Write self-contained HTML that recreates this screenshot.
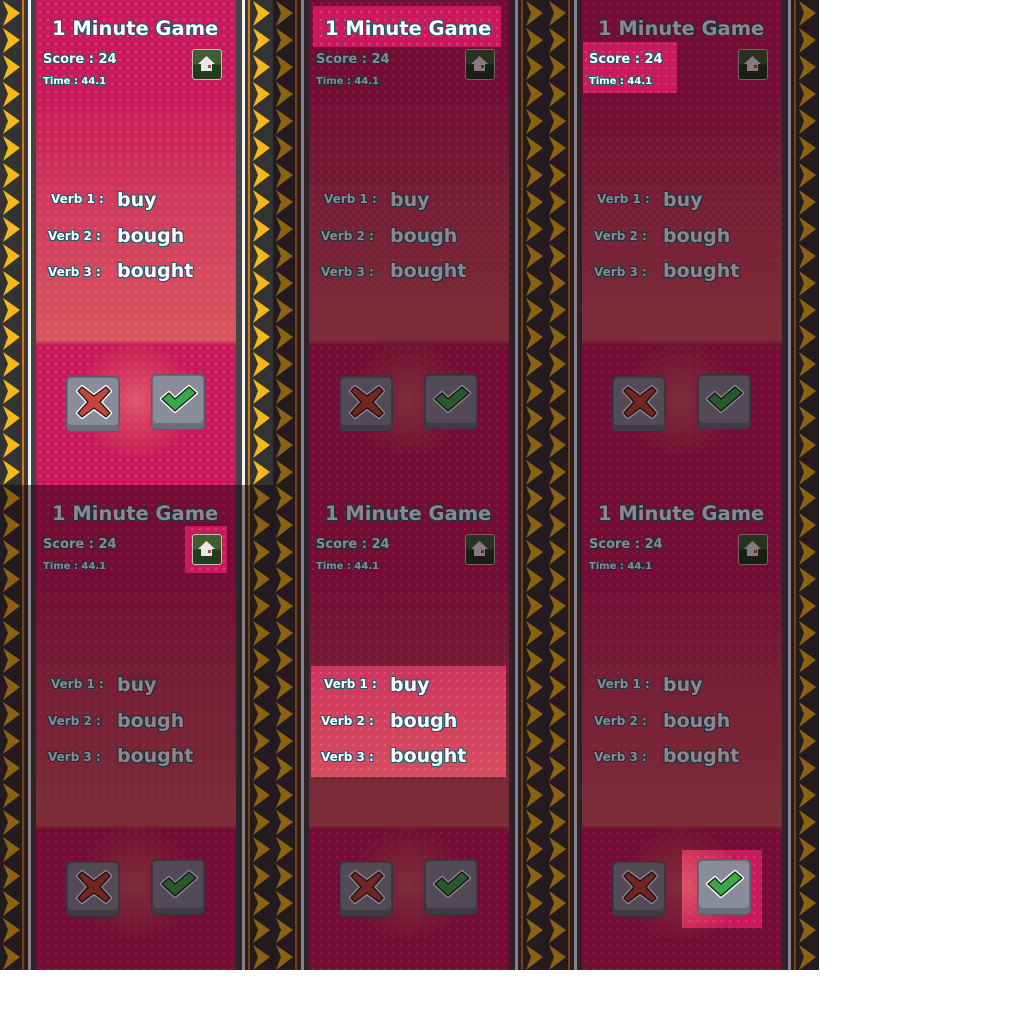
<!DOCTYPE html>
<html><head><meta charset="utf-8"><style>
*{margin:0;padding:0;box-sizing:border-box}
body{width:1024px;height:1024px;background:#fff;position:relative;overflow:hidden;font-family:"DejaVu Sans","Liberation Sans",sans-serif;font-weight:bold}
.p{position:absolute;width:273px;height:485px;overflow:hidden}
.c{position:absolute;left:0;top:0;width:273px;height:485px}
.zz{position:absolute;top:0;width:24px;height:485px;background:#333}
.ln{position:absolute;top:0;height:485px}
.pk{position:absolute;left:36px;top:0;width:200px;height:485px;
background:
radial-gradient(circle,rgba(255,120,140,.35) 1px,transparent 1.6px) 0 0/8px 8px,
linear-gradient(#c8195a 0,#c8195a 90px,#cf3a5e 200px,#d6565f 340px,#c8195a 345px,#c8195a 485px)}
.bz{position:absolute;left:36px;top:345px;width:200px;height:110px;background:radial-gradient(ellipse 60px 60px at 100px 55px,rgba(232,110,110,.7),rgba(210,70,90,.3) 80%,transparent)}
.t{position:absolute;color:#fff;white-space:nowrap;text-shadow:0 0 1px #1d5d70,1px 1px 0 #1d5d70,-1px -1px 0 #1d5d70,1px -1px 0 #1d5d70,-1px 1px 0 #1d5d70}
.home{position:absolute;left:192px;top:49px;width:30px;height:31px;border:1.5px solid #c8b8c0;border-radius:3px;background:linear-gradient(#3d5f30 50%,#1e3d18 50%)}
.btn{position:absolute;width:54px;height:56px;border-radius:5px;background:#6b6e7a;border:1px solid #5a5d68}
.btn i{position:absolute;left:1px;top:1px;right:1px;bottom:6px;border-radius:4px;background:#8a8d99}
.ov{position:absolute;left:0;top:0;width:273px;height:485px;background:rgba(20,0,10,.47)}
</style></head><body>

<svg width="0" height="0" style="position:absolute"><defs>
<pattern id="zg" width="24" height="27" patternUnits="userSpaceOnUse">
<polygon points="3,1 20,13 3,26 8,13" fill="#f5b81a"/>
</pattern></defs></svg>

<script>
var X='M8 5 L20 14 L32 5 L36 9 L26 20 L36 31 L32 35 L20 26 L8 35 L4 31 L14 20 L4 9Z';
var V='M3 17 L10 11 L16 17 L30 5 L37 11 L16 29Z';
var content=`
<div class="zz" style="left:0"><svg width="24" height="485"><rect width="24" height="485" fill="url(#zg)"/></svg></div>
<div class="ln" style="left:22px;width:2px;background:#d07a10"></div>
<div class="ln" style="left:24px;width:4px;background:#3a3a3a"></div>
<div class="ln" style="left:28px;width:3px;background:#f4f4f4"></div>
<div class="ln" style="left:31px;width:5px;background:#444"></div>
<div class="pk"></div><div class="bz"></div>
<div class="ln" style="left:236px;width:6px;background:#444"></div>
<div class="ln" style="left:242px;width:3px;background:#f4f4f4"></div>
<div class="ln" style="left:245px;width:3px;background:#3a3a3a"></div>
<div class="ln" style="left:248px;width:2px;background:#d07a10"></div>
<div class="zz" style="left:250px;width:23px"><svg width="24" height="485"><rect width="24" height="485" fill="url(#zg)"/></svg></div>
<div class="t" style="left:52px;top:17px;font-size:19.5px">1 Minute Game</div>
<div class="t" style="left:43px;top:52px;font-size:13px">Score : 24</div>
<div class="t" style="left:43px;top:76px;font-size:10px">Time : 44.1</div>
<div class="home"><svg width="27" height="28" viewBox="0 0 27 28"><polygon points="13.5,6 5,14 8,14 8,21 19,21 19,14 22,14" fill="#f0e6e8"/><rect x="15" y="15" width="3" height="3" fill="#a05060"/></svg></div>
<div class="t" style="left:51px;top:192px;font-size:12px">Verb 1 :</div>
<div class="t" style="left:117px;top:189px;font-size:19px">buy</div>
<div class="t" style="left:48px;top:229px;font-size:12px">Verb 2 :</div>
<div class="t" style="left:117px;top:225px;font-size:19px">bough</div>
<div class="t" style="left:48px;top:265px;font-size:12px">Verb 3 :</div>
<div class="t" style="left:117px;top:260px;font-size:19px">bought</div>
<div class="btn" style="left:66px;top:376px"><i></i><svg style="position:absolute;left:7px;top:5px" width="40" height="40" viewBox="0 0 40 40"><path d="${X}" fill="#c8453a" stroke="#fff" stroke-width="4" paint-order="stroke" stroke-linejoin="round"/><path d="${X}" fill="#c8453a" stroke="#222" stroke-width="1.4" stroke-linejoin="round"/></svg></div>
<div class="btn" style="left:151px;top:374px"><i></i><svg style="position:absolute;left:7px;top:7px" width="40" height="36" viewBox="0 0 40 36"><path d="${V}" fill="#3aa84a" stroke="#fff" stroke-width="4" paint-order="stroke" stroke-linejoin="round"/><path d="${V}" fill="#3aa84a" stroke="#222" stroke-width="1.4" stroke-linejoin="round"/></svg></div>
`;
var panels=[[0,0,null],[273,0,[40,6,188,41]],[546,0,[37,42,94,51]],[0,485,[185,41,42,47]],[273,485,[38,181,195,111]],[546,485,[136,365,80,78]]];
var h='';
panels.forEach(function(p){
 h+='<div class="p" style="left:'+p[0]+'px;top:'+p[1]+'px"><div class="c">'+content+'</div>';
 if(p[2]){var r=p[2];
  h+='<div class="ov"></div><div class="c" style="clip-path:inset('+r[1]+'px '+(273-r[0]-r[2])+'px '+(485-r[1]-r[3])+'px '+r[0]+'px)">'+content+'</div>';}
 h+='</div>';
});
document.body.insertAdjacentHTML('beforeend',h);
</script>
</body></html>
